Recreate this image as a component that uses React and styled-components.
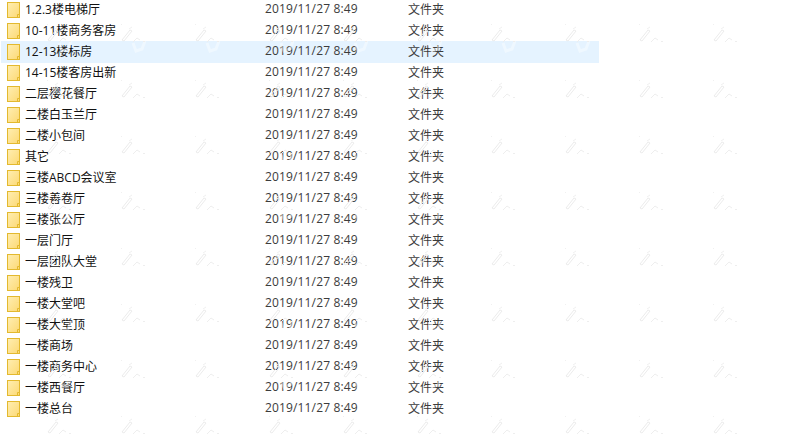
import React from "react";
import styled, { createGlobalStyle } from "styled-components";

const GlobalStyle = createGlobalStyle`
  html, body {
    margin: 0;
    padding: 0;
    background: #fff;
  }
`;

const Page = styled.div`
  position: relative;
  width: 786px;
  height: 438px;
  overflow: hidden;
  background: #fff;
  font-family: "Open Sans", "Noto Sans CJK SC", sans-serif;
  font-size: 12px;
  color: #111;
`;

const List = styled.div`
  display: flex;
  flex-direction: column;
  width: 598px;
  margin-left: 1px;
  transform: translateY(-1px);
`;

const Row = styled.div`
  display: flex;
  align-items: center;
  height: 21px;
  flex-shrink: 0;
  background: ${(props) => (props.$active ? "#e5f3ff" : "transparent")};
  box-shadow: ${(props) => (props.$active ? "0 1px 0 #e5f3ff" : "none")};
`;

const IconCell = styled.div`
  display: flex;
  width: 24px;
  padding-left: 6px;
  box-sizing: border-box;
`;

const Name = styled.div`
  width: 240px;
  margin-bottom: 2px;
  white-space: nowrap;
`;

const Modified = styled.div`
  width: 143px;
  margin-bottom: 2px;
  color: #3c3c3c;
  letter-spacing: 0.15px;
  white-space: nowrap;
`;

const Kind = styled.div`
  margin-bottom: 2px;
  color: #3c3c3c;
`;

const Marks = styled.svg`
  position: absolute;
  inset: 0;
  pointer-events: none;
`;

const names = [
  "1.2.3楼电梯厅",
  "10-11楼商务客房",
  "12-13楼标房",
  "14-15楼客房出新",
  "二层樱花餐厅",
  "二楼白玉兰厅",
  "二楼小包间",
  "其它",
  "三楼ABCD会议室",
  "三楼善卷厅",
  "三楼张公厅",
  "一层门厅",
  "一层团队大堂",
  "一楼残卫",
  "一楼大堂吧",
  "一楼大堂顶",
  "一楼商场",
  "一楼商务中心",
  "一楼西餐厅",
  "一楼总台",
];

function FolderIcon() {
  return (
    <svg width="13" height="16" viewBox="0 0 13 16">
      <defs>
        <linearGradient id="folderFill" x1="0" y1="0" x2="1" y2="1">
          <stop offset="0" stopColor="#ffeeb2" />
          <stop offset="1" stopColor="#fcd975" />
        </linearGradient>
      </defs>
      <rect x="0.5" y="0.5" width="12" height="15" fill="url(#folderFill)" stroke="#e3b92e" />
      <path d="M10.5 15.5V12.5H12.5" fill="none" stroke="#e3b92e" />
    </svg>
  );
}

function Watermark({ x, y }) {
  return (
    <g transform={`translate(${x} ${y})`} fill="none">
      <path d="M13 19L16 27L22 25L25 17" stroke="#fff" strokeOpacity="0.4" strokeWidth="3" />
      <path d="M1 0.5H2" stroke="#f0f0f0" />
      <path d="M2 16L10 6L12 7L4 17Z" stroke="#ececec" />
      <path d="M9 5L12 3" stroke="#f0f0f0" />
      <path d="M13 18L17 14L20 16" stroke="#eeeeee" />
      <path d="M23 17.5H25" stroke="#eeeeee" />
    </g>
  );
}

const markSpots = [];
for (let y = -32; y < 438; y += 56) {
  for (let x = -28; x <= 786; x += 74) {
    markSpots.push({ x, y });
  }
}

export default function App() {
  return (
    <Page>
      <GlobalStyle />
      <List>
        {names.map((name, i) => (
          <Row key={name} $active={i === 2}>
            <IconCell>
              <FolderIcon />
            </IconCell>
            <Name>{name}</Name>
            <Modified>2019/11/27 8:49</Modified>
            <Kind>文件夹</Kind>
          </Row>
        ))}
      </List>
      <Marks width="786" height="438">
        {markSpots.map((spot) => (
          <Watermark key={`${spot.x}-${spot.y}`} x={spot.x} y={spot.y} />
        ))}
      </Marks>
    </Page>
  );
}
